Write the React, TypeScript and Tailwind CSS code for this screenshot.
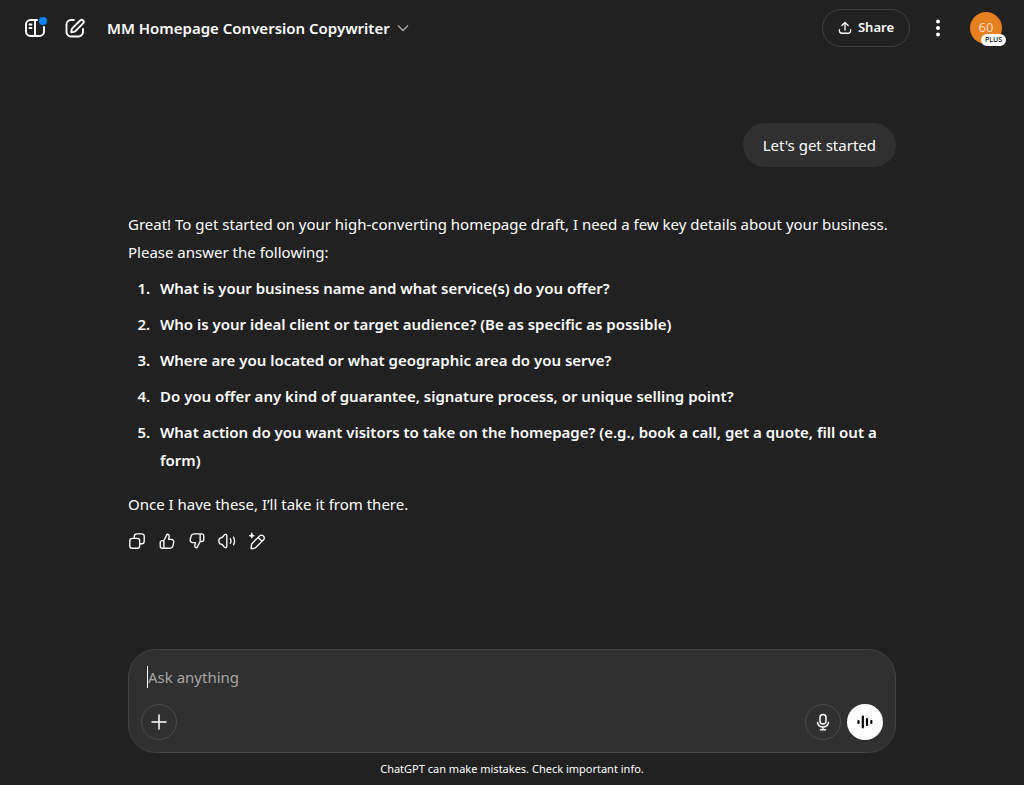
import type { ReactNode } from "react";

const questions = [
  "What is your business name and what service(s) do you offer?",
  "Who is your ideal client or target audience? (Be as specific as possible)",
  "Where are you located or what geographic area do you serve?",
  "Do you offer any kind of guarantee, signature process, or unique selling point?",
  "What action do you want visitors to take on the homepage? (e.g., book a call, get a quote, fill out a form)",
];

interface IconProps {
  className?: string;
  children: ReactNode;
}

function Icon({ className = "size-5", children }: IconProps) {
  return (
    <svg
      viewBox="0 0 20 20"
      className={className}
      fill="none"
      stroke="currentColor"
      strokeWidth="1.5"
      strokeLinecap="round"
      strokeLinejoin="round"
      aria-hidden="true"
    >
      {children}
    </svg>
  );
}

const messageActions = [
  {
    label: "Copy",
    icon: (
      <>
        <rect x="2" y="7" width="11" height="11" rx="2.8" />
        <path d="M7 6.8V4.800A2.800 2.800 0 0 1 9.800 2h5.400A2.800 2.800 0 0 1 18 4.800v5.400a2.800 2.800 0 0 1-2.800 2.800h-2" />
      </>
    ),
  },
  {
    label: "Good response",
    icon: (
      <path d="M6.500 9.500 10.200 2.300c1.600 0 2.600 1.400 2.200 3L11.700 8.200h3.200c1.800 0 3 1.600 2.600 3.300l-1 4.100a3.200 3.200 0 0 1-3.100 2.400H4.700a2.200 2.200 0 0 1-2.200-2.200v-4.100a2.200 2.200 0 0 1 2.200-2.200h1.800v8.400" />
    ),
  },
  {
    label: "Bad response",
    icon: (
      <path d="M13.500 10.500 9.800 17.700c-1.600 0-2.600-1.400-2.200-3l.7-2.900H5.100c-1.800 0-3-1.600-2.600-3.300l1-4.100A3.200 3.200 0 0 1 6.600 2h8.700a2.200 2.200 0 0 1 2.200 2.200v4.100a2.200 2.200 0 0 1-2.200 2.200h-1.800V2.100" />
    ),
  },
  {
    label: "Read aloud",
    icon: (
      <>
        <path d="M1 9.500c0-1.600.8-2.700 2.300-2.900.8-.1 1.300-.4 1.800-1l2-2.400c1-1.100 2.700-.5 2.700 1v11.600c0 1.500-1.700 2.100-2.700 1l-2-2.400c-.5-.6-1-.9-1.800-1C1.800 13.200 1 12.100 1 10.500z" />
        <path d="M13.700 7.500a5 5 0 0 1 0 5M17.300 5.800a9 9 0 0 1 0 8.400" />
      </>
    ),
  },
  {
    label: "Edit in canvas",
    icon: (
      <>
        <path d="m4.300 13 8.700-8.700a2.700 2.700 0 0 1 3.900 0l.4.400a2.700 2.700 0 0 1 0 3.900l-8.700 8.700c-.6.600-1.200.8-2 .9l-3.200.4.400-3.500c.1-.8.100-1.500.5-2.100zM11.300 6l4.200 4.200" />
        <path d="M4.200 1.300c.3 1.900.9 2.500 2.800 2.800-1.900.3-2.500.9-2.800 2.800-.3-1.900-.9-2.500-2.800-2.800 1.900-.3 2.500-.9 2.800-2.800z" fill="currentColor" strokeWidth="1" />
      </>
    ),
  },
];

function Header() {
  return (
    <header className="flex h-14 items-center justify-between pr-[22px] pl-[17px]">
      <div className="flex items-center gap-1">
        <button type="button" aria-label="Open sidebar" className="relative flex size-9 items-center justify-center rounded-lg">
          <svg viewBox="0 0 24 24" className="size-6" fill="none" stroke="currentColor" strokeWidth="1.900" strokeLinecap="round" aria-hidden="true">
            <path d="M14 4H7.500A4.500 4.500 0 0 0 3 8.500v7A4.500 4.500 0 0 0 7.500 20h9a4.500 4.500 0 0 0 4.500-4.500V11" />
            <path d="M12 4v16M6.500 8.500h2M6.500 12h2" />
          </svg>
          <span className="absolute top-[7px] right-1.5 size-2 rounded-full bg-[#0a84ff]" />
        </button>
        <button type="button" aria-label="New chat" className="flex size-9 items-center justify-center rounded-lg">
          <svg viewBox="0 0 24 24" className="size-6" fill="none" stroke="currentColor" strokeWidth="1.900" strokeLinecap="round" strokeLinejoin="round" aria-hidden="true">
            <path d="M11 4H8a4.500 4.500 0 0 0-4.500 4.500V16A4.500 4.500 0 0 0 8 20.500h7.500A4.500 4.500 0 0 0 20 16v-3" />
            <path d="m9.500 12.200 7.700-7.700a2 2 0 0 1 2.900 2.900l-7.700 7.700c-.5.500-1 .7-1.600.8l-2.500.3.300-2.400c.1-.6.400-1.100.9-1.600z" />
          </svg>
        </button>
        <button type="button" className="ml-0.5 flex items-center gap-1.5 px-2 py-1.5 text-[15px] font-semibold">
          MM Homepage Conversion Copywriter
          <svg viewBox="0 0 14 14" className="size-3.5 text-[#a8a8a8]" fill="none" stroke="currentColor" strokeWidth="1.400" aria-hidden="true">
            <path d="m2 4.500 5 5 5-5" />
          </svg>
        </button>
      </div>

      <div className="flex items-center">
        <button type="button" className="flex h-[38px] items-center gap-1.5 rounded-full border border-[#424242] px-[15px] text-[13px] font-semibold">
          <Icon className="size-3.5">
            <path d="M10 13V2.500M5.500 6.500 10 2l4.500 4.500M2 12.500V14a3.500 3.500 0 0 0 3.500 3.500h9A3.500 3.500 0 0 0 18 14v-1.500" strokeWidth="1.900" />
          </Icon>
          Share
        </button>
        <button type="button" aria-label="More options" className="ml-2.5 flex size-9 items-center justify-center">
          <svg viewBox="0 0 20 20" className="size-5" fill="currentColor" aria-hidden="true">
            <circle cx="10" cy="3.500" r="2" />
            <circle cx="10" cy="10" r="2" />
            <circle cx="10" cy="16.500" r="2" />
          </svg>
        </button>
        <button type="button" aria-label="Account" className="relative ml-3.5 flex size-8 items-center justify-center rounded-full bg-[#e67e22] text-[13px] text-[#fbdcbc]">
          60
          <span className="absolute -right-1 -bottom-0.5 rounded-full bg-white px-1 text-[7px] leading-3 font-medium text-black">
            PLUS
          </span>
        </button>
      </div>
    </header>
  );
}

function Composer() {
  return (
    <form className="rounded-[28px] border border-[#454545] bg-[#303030] p-3">
      <div className="relative px-[7px]">
        <textarea
          rows={1}
          aria-label="Message"
          placeholder="Ask anything"
          className="block h-[42px] w-full resize-none bg-transparent py-[3px] text-[15px] leading-6 outline-none placeholder:text-[#a6a6a6]"
        />
        <span className="absolute top-1 left-1.5 h-[22px] w-px bg-white" />
      </div>
      <div className="flex items-center justify-between">
        <button type="button" aria-label="Add files" className="flex size-9 items-center justify-center rounded-full border border-[#4d4d4d]">
          <Icon>
            <path d="M10 3v14M3 10h14" />
          </Icon>
        </button>
        <div className="flex items-center gap-1.5">
          <button type="button" aria-label="Dictate" className="flex size-9 items-center justify-center rounded-full border border-[#4d4d4d]">
            <Icon>
              <rect x="7" y="2.500" width="6" height="9.500" rx="3" />
              <path d="M4.500 10.500a5.600 5.600 0 0 0 11 0M10 15v2.500M7.500 17.700h5" />
            </Icon>
          </button>
          <button type="button" aria-label="Use voice mode" className="flex size-9 items-center justify-center rounded-full bg-white text-black">
            <svg viewBox="0 0 20 20" className="size-5" fill="none" stroke="currentColor" strokeWidth="2.200" strokeLinecap="round" aria-hidden="true">
              <path d="M3.500 9v2M7.800 4.500v11M12 7v6M16.300 9v2" />
            </svg>
          </button>
        </div>
      </div>
    </form>
  );
}

export default function App() {
  return (
    <div className="flex min-h-screen flex-col bg-[#212121] font-['Noto_Sans','Open_Sans',sans-serif] text-white">
      <Header />

      <main className="mx-auto w-full max-w-3xl flex-1 pt-[67px]">
        <div className="flex justify-end">
          <p className="rounded-[22px] bg-[#303030] px-5 py-2.5 text-[15px] leading-6">Let's get started</p>
        </div>

        <article className="mt-[43px] text-[15px] leading-7">
          <p>
            Great! To get started on your high-converting homepage draft, I need a few key details about your business.
            Please answer the following:
          </p>
          <ol className="mt-2 list-decimal space-y-2 pl-[26px] font-semibold">
            {questions.map((question) => (
              <li key={question} className="pl-1.5">{question}</li>
            ))}
          </ol>
          <p className="mt-4">Once I have these, I’ll take it from there.</p>
        </article>

        <div className="-ml-1.5 mt-2 flex">
          {messageActions.map((action) => (
            <button key={action.label} type="button" aria-label={action.label} className="flex size-[30px] items-center justify-center">
              <Icon className="size-[18px]">{action.icon}</Icon>
            </button>
          ))}
        </div>
      </main>

      <footer className="mx-auto w-full max-w-3xl">
        <Composer />
        <p className="py-2 text-center text-[11px] leading-4">ChatGPT can make mistakes. Check important info.</p>
      </footer>
    </div>
  );
}
